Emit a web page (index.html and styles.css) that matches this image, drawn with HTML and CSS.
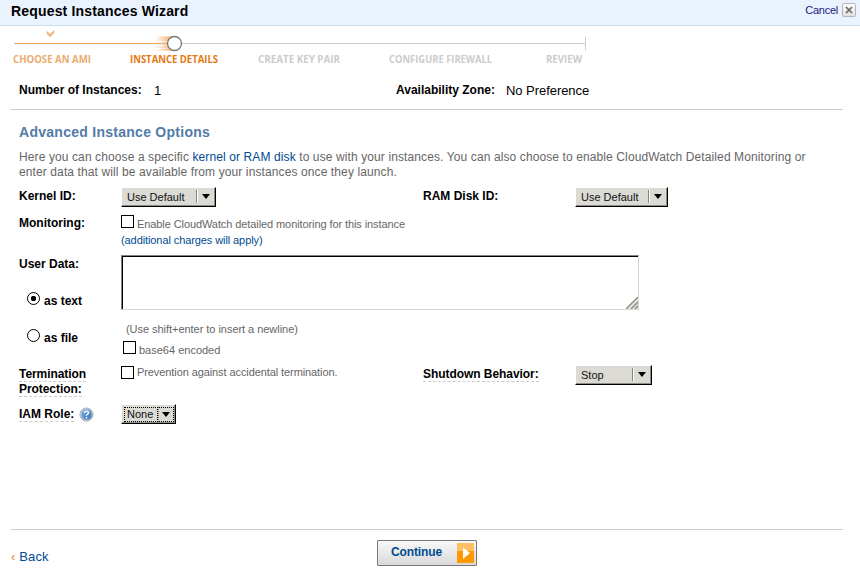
FILE: index.html
```html
<!DOCTYPE html>
<html lang="en">
<head>
<meta charset="utf-8">
<title>Request Instances Wizard</title>
<link rel="stylesheet" href="styles.css">
</head>
<body>
<header class="titlebar">
  <h1>Request Instances Wizard</h1>
  <a class="cancel">Cancel</a>
  <svg class="close" width="14" height="14" viewBox="0 0 14 14">
    <defs><linearGradient id="cg" x2="0" y2="1"><stop stop-color="#fff"/><stop offset="1" stop-color="#ddd"/></linearGradient></defs>
    <rect x=".5" y=".5" width="13" height="13" rx="1" fill="url(#cg)" stroke="#b5b5b5"/>
    <path d="M4 4l6 6M10 4l-6 6" stroke="#666" stroke-width="1.700"/>
  </svg>
</header>
<svg class="steps" width="860" height="44" viewBox="0 26 860 44">
  <defs>
    <linearGradient id="trail"><stop stop-color="#f3a45c" stop-opacity="0"/><stop offset="1" stop-color="#f3a45c" stop-opacity=".6"/></linearGradient>
  </defs>
  <path d="M47 31.500l3 2.500 4-3.500v2.500l-4 4-3-3z" fill="#eeb98a" stroke="#eeb98a" stroke-width=".6"/>
  <path d="M14 43.500H160" stroke="#eaa967"/>
  <path d="M160 43.500H585.500M585.500 37v13" stroke="#ccc" fill="none"/>
  <path d="M158 36h14v3h-14zM155 39h14v2h-14zM152 42h16v3h-16zM155 46h14v2h-14zM158 49h14v2h-14z" fill="url(#trail)"/>
  <path d="M160 37h12v13h-12z" fill="url(#trail)"/>
  <circle cx="174.500" cy="43.500" r="7" fill="#fff" stroke="#777" stroke-width="1.300"/>
  <g class="step-labels">
    <text class="done" x="13" y="63" textLength="78" lengthAdjust="spacingAndGlyphs">CHOOSE AN AMI</text>
    <text class="current" x="130" y="63" textLength="88" lengthAdjust="spacingAndGlyphs">INSTANCE DETAILS</text>
    <text x="258" y="63" textLength="82" lengthAdjust="spacingAndGlyphs">CREATE KEY PAIR</text>
    <text x="389" y="63" textLength="103" lengthAdjust="spacingAndGlyphs">CONFIGURE FIREWALL</text>
    <text x="546" y="63" textLength="36" lengthAdjust="spacingAndGlyphs">REVIEW</text>
  </g>
</svg>
<main>
  <section class="summary">
    <b>Number of Instances:</b><span>1</span>
    <b>Availability Zone:</b><span>No Preference</span>
  </section>
  <section class="options">
    <h2>Advanced Instance Options</h2>
    <p class="intro">Here you can choose a specific <a>kernel or RAM disk</a> to use with your instances. You can also choose to enable CloudWatch Detailed Monitoring or<br>enter data that will be available from your instances once they launch.</p>
    <div class="row kernel">
      <b class="label">Kernel ID:</b>
      <div class="select wide"><span>Use Default</span><i></i></div>
      <b class="label">RAM Disk ID:</b>
      <div class="select"><span>Use Default</span><i></i></div>
    </div>
    <div class="row monitoring">
      <b class="label">Monitoring:</b>
      <div class="field">
        <div class="check"><i></i><span>Enable CloudWatch detailed monitoring for this instance</span></div>
        <a>(additional charges will apply)</a>
      </div>
    </div>
    <div class="row userdata">
      <div>
        <b class="label">User Data:</b>
        <div class="radio first"><i class="on"></i><b>as text</b></div>
        <div class="radio"><i></i><b>as file</b></div>
      </div>
      <div class="field">
        <div class="textarea">
          <svg width="12" height="12" viewBox="0 0 12 12"><path d="M0 12L12 0V12z" fill="#e4e2dd"/><path d="M0 12L12 0M5 12l7-7M9 12l3-3" stroke="#888780" stroke-width="1.300"/></svg>
        </div>
        <div class="hint">(Use shift+enter to insert a newline)</div>
        <div class="check encoded"><i></i><span>base64 encoded</span></div>
      </div>
    </div>
    <div class="row protection">
      <div><b class="label dashed">Termination</b><b class="label dashed">Protection:</b></div>
      <div class="check"><i></i><span>Prevention against accidental termination.</span></div>
      <b class="label dashed">Shutdown Behavior:</b>
      <div class="select stop"><span>Stop</span><i></i></div>
    </div>
    <div class="row iam">
      <div class="role">
        <b class="label dashed">IAM Role:</b>
        <svg width="15" height="15" viewBox="0 0 15 15">
          <defs><linearGradient id="hg" x2="1" y2="1"><stop stop-color="#8ab8e8"/><stop offset="1" stop-color="#2868b0"/></linearGradient></defs>
          <circle cx="7.500" cy="7.500" r="6.500" fill="url(#hg)" stroke="#aaa9a5"/>
          <circle cx="7.500" cy="7.500" r="5.600" fill="none" stroke="#d5e5f5" stroke-width=".8"/>
          <path d="M5.500 6c0-2.500 4-2.400 4-.2 0 1.400-2 1.300-2 2.900M7.500 10v1.400" fill="none" stroke="#fff" stroke-width="1.400"/>
        </svg>
      </div>
      <div class="select none"><span>None</span><i></i></div>
    </div>
  </section>
  <footer>
    <a class="back"><span>‹</span> Back</a>
    <button class="continue"><span>Continue</span>
      <svg width="17" height="20" viewBox="0 0 17 20"><path fill="#ffc064" d="M0 0h17v8H0z"/><path fill="#ff9900" d="M0 8h17v12H0z"/><path fill="#fff" d="M6 4.500l7 5.500-7 6z"/></svg>
    </button>
  </footer>
</main>
</body>
</html>
```
FILE: styles.css
```css
* { box-sizing: border-box; }
body {
  margin: 0;
  width: 860px;
  height: 578px;
  overflow: hidden;
  background: #fff;
  color: #000;
  font: 12px/15px "Liberation Sans", Arial, sans-serif;
}
a { color: #004b91; }
h1, h2, p { margin: 0; }
.titlebar {
  display: flex;
  height: 26px;
  padding: 3px 4px 0 11px;
  background: #eaf2fe;
  border-bottom: 1px solid #cadeea;
}
h1 { flex: 1; font-size: 14px; line-height: 17px; letter-spacing: .17px; }
.cancel { color: #1a1a80; font-size: 11px; letter-spacing: -.25px; margin-right: 4px; }
.steps { display: block; }
.step-labels { font: bold 10.5px "Open Sans", sans-serif; fill: #ccc; }
.done { fill: #eaac70; }
.current { fill: #e47911; }

main { padding: 0 17px 0 11px; }
.summary {
  display: grid;
  grid-template-columns: 135px 242px 110px 1fr;
  height: 40px;
  padding: 12px 0 0 8px;
  border-bottom: 1px solid #ccc;
}
.summary b { padding-top: 1px; }
.summary span { font-size: 13px; line-height: 17px; letter-spacing: -.05px; }
.options { height: 419px; padding: 14px 0 0 8px; }
h2 { color: #527ba8; font-size: 14px; line-height: 17px; letter-spacing: .27px; }
.intro { margin-top: 9px; color: #666; white-space: nowrap; letter-spacing: .108px; }
.row { display: grid; grid-template-columns: 102px 302px 152px 1fr; align-items: start; }
.kernel { height: 35px; padding-top: 7px; }
.kernel .label { margin-top: 2px; }
.protection > .label { margin-top: 1px; }
.select {
  display: flex;
  width: 93px;
  height: 20px;
  border: 1px solid;
  border-color: #fff #000 #000 #fff;
  box-shadow: inset -1px -1px #8e8c86;
  background: #dbdad5;
  color: #111;
  font-size: 11px;
  line-height: 18px;
}
.select.wide { width: 95px; }
.select span { flex: 1; padding-left: 5px; white-space: nowrap; }
.select i {
  display: grid;
  place-items: center;
  width: 18px;
  height: 13px;
  margin: 2px 1px 0 0;
  border-left: 1px solid #85837d;
  box-shadow: inset 1px 0 #fff;
}
.select i::after {
  content: "";
  border: solid transparent;
  border-width: 5px 4.5px 0;
  border-top-color: #000;
}
.select.stop { width: 77px; margin-top: -1px; }
.select.none { width: 55px; margin-top: -3px; }
.none span { flex: none; width: 34px; height: 15px; margin: 2px 0 0 2px; padding-left: 2px; border: 1px dotted #000; line-height: 13px; }
.none i { height: 15px; width: 16px; border: 1px dotted #000; border-left-color: #85837d; box-shadow: none; }
.monitoring { height: 41px; }
.monitoring .label { margin-top: 1px; }
.field { color: #666; font-size: 11px; }
.field a { display: block; margin-top: -1px; line-height: 16px; letter-spacing: -.09px; }
.check { display: flex; color: #666; font-size: 11px; white-space: nowrap; }
.check i { width: 13px; height: 13px; margin-right: 3px; border: 1px solid #000; background: #fff; }
.check span { line-height: 18px; letter-spacing: -.09px; }
.userdata { height: 110px; }
.userdata .label { display: block; margin-top: 1px; }
.radio { display: flex; gap: 4px; margin: 20px 0 0 8px; }
.radio i { width: 13px; height: 13px; border: 1px solid #000; border-radius: 50%; }
.radio i.on { background: radial-gradient(circle, #000 2.400px, #fff 3px); }
.radio b { padding-top: 2px; }
.textarea {
  display: flex;
  justify-content: flex-end;
  align-items: flex-end;
  width: 518px;
  height: 55px;
  margin-top: -1px;
  border: 1px solid;
  border-color: #85837d #d8d7d2 #d8d7d2 #85837d;
  box-shadow: inset 1px 1px #000;
}
.hint { padding: 12px 0 0 5px; letter-spacing: -.04px; }
.encoded { margin: 4px 0 0 2px; }
.encoded span { letter-spacing: 0; }
.protection { height: 41px; }
.protection .label { width: max-content; letter-spacing: -.06px; }
.protection > div:first-child { display: grid; padding-top: 1px; }
.dashed { border-bottom: 1px dashed #ccc; line-height: 14px; }
.protection .check { margin-top: -1px; }
.protection .check i { margin-top: 1px; }
.protection .check span { line-height: 14px; }
.role { display: flex; gap: 5px; }
footer {
  display: flex;
  height: 49px;
  border-top: 1px solid #ccc;
}
.back { width: 366px; padding-top: 19px; font-size: 13px; letter-spacing: .15px; }
.back span { color: #f08a24; }
.continue {
  display: flex;
  width: 100px;
  height: 26px;
  margin-top: 10px;
  padding: 2px 2px 0 13px;
  border: 1px solid #777;
  border-radius: 1px;
  background: linear-gradient(#f8f8f8, #d9d9dc);
  color: #004b91;
  font: bold 12px/18px "Liberation Sans", sans-serif;
  letter-spacing: -.12px;
}
.continue span { flex: 1; text-align: left; }
```
